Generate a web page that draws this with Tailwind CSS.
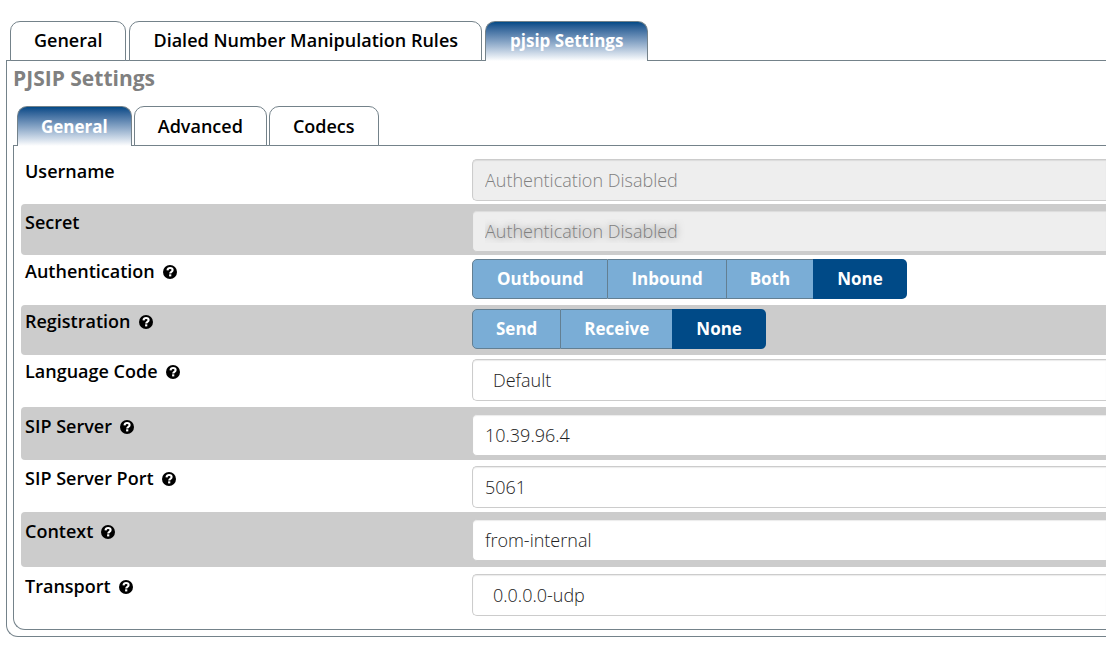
<!DOCTYPE html>
<html lang="en">
<head>
<meta charset="utf-8">
<meta name="viewport" content="width=device-width, initial-scale=1">
<title>PJSIP Settings</title>
<script src="https://cdn.jsdelivr.net/npm/@tailwindcss/browser@4"></script>
</head>
<body class="overflow-x-hidden bg-white pt-[21px] pb-3 pl-1.5 font-['Open_Sans',sans-serif] text-lg leading-6 text-black">
<svg class="hidden" aria-hidden="true">
  <symbol id="help" viewBox="0 0 14 14">
    <circle cx="7" cy="7" r="7" fill="currentColor"/>
    <path d="M4.5 5.4C4.7 3.8 5.7 3 7.1 3C8.6 3 9.6 3.9 9.6 5.1C9.6 6.9 7.2 6.8 7.2 8.5" fill="none" stroke="white" stroke-width="2.1"/>
    <path d="M6.1 9.3h2.2v2.1h-2.2z" fill="white"/>
  </symbol>
</svg>

<nav class="relative z-10 -mb-px flex gap-[3px] pl-1" aria-label="Trunk sections">
  <button class="h-10 rounded-t-[10px] border border-[#74828a] bg-white px-[23px] pb-0.5 font-semibold">General</button>
  <button class="h-10 rounded-t-[10px] border border-[#74828a] bg-white px-[23px] pb-0.5 font-semibold">Dialed Number Manipulation Rules</button>
  <button class="h-10 rounded-t-[10px] border border-b-0 border-[#74828a] bg-linear-to-b from-[#004a87] to-white px-6 pb-px text-[17px] font-bold text-white" aria-current="page">pjsip Settings</button>
</nav>

<main class="rounded-bl-[12px] border border-r-0 border-[#74828a] pb-1.5 pl-1.5">
  <h1 class="pt-[3px] text-[21px] leading-7 font-bold text-[#808080]">PJSIP Settings</h1>

  <nav class="relative z-10 mt-3.5 -mb-px flex gap-0.5 pl-1" aria-label="PJSIP sections">
    <button class="h-10 rounded-t-[10px] border border-b-0 border-[#74828a] bg-linear-to-b from-[#004a87] to-white px-[23px] text-[17px] font-bold text-white" aria-current="page">General</button>
    <button class="h-10 rounded-t-[10px] border border-[#74828a] bg-white px-[23px] font-semibold">Advanced</button>
    <button class="h-10 rounded-t-[10px] border border-[#74828a] bg-white px-[23px] font-semibold">Codecs</button>
  </nav>

  <form class="rounded-bl-[12px] border border-r-0 border-[#74828a] pt-2 pb-[13px] pl-[7px]">
    <div class="grid grid-cols-[447px_1fr] items-start pt-[5px] pb-[3px] pl-1">
      <label for="username" class="font-semibold">Username</label>
      <input id="username" disabled placeholder="Authentication Disabled" class="h-[42px] w-full rounded-l-[5px] border border-r-0 border-[#ccc] bg-[#eee] px-3 font-light shadow-[inset_0_1px_1px_rgba(0,0,0,0.08)] placeholder:text-[#808080]">
    </div>
    <div class="grid grid-cols-[447px_1fr] items-start rounded-l-[4px] bg-[#ccc] pt-1.5 pb-[3px] pl-1">
      <label for="secret" class="font-semibold">Secret</label>
      <input id="secret" disabled placeholder="Authentication Disabled" class="h-[42px] w-full rounded-l-[5px] border border-r-0 border-[#ccc] bg-[#eee] px-3 font-light shadow-[inset_0_1px_1px_rgba(0,0,0,0.08)] text-shadow-[0_0_7px_rgba(0,0,0,0.5)] placeholder:text-[#808080]">
    </div>
    <div class="grid grid-cols-[447px_1fr] items-start pt-1 pb-1.5 pl-1">
      <span id="auth" class="flex items-center gap-2 font-semibold">Authentication <svg class="mt-0.5 size-3.5" aria-hidden="true"><use href="#help"/></svg></span>
      <div role="group" aria-labelledby="auth" class="flex text-[17px] font-bold text-white">
        <button type="button" class="h-10 rounded-l-[5px] border border-[#637f92] bg-[#7aadd6] px-6">Outbound</button>
        <button type="button" class="h-10 border border-l-0 border-[#637f92] bg-[#7aadd6] px-[23px]">Inbound</button>
        <button type="button" class="h-10 border-y border-[#637f92] bg-[#7aadd6] px-[23px]">Both</button>
        <button type="button" aria-pressed="true" class="h-10 rounded-r-[5px] bg-[#004a87] px-6">None</button>
      </div>
    </div>
    <div class="grid grid-cols-[447px_1fr] items-start rounded-l-[4px] bg-[#ccc] pt-1 pb-1.5 pl-1">
      <span id="registration" class="flex items-center gap-2 font-semibold">Registration <svg class="mt-0.5 size-3.5" aria-hidden="true"><use href="#help"/></svg></span>
      <div role="group" aria-labelledby="registration" class="flex text-[17px] font-bold text-white">
        <button type="button" class="h-10 rounded-l-[5px] border border-[#637f92] bg-[#7aadd6] px-[23px]">Send</button>
        <button type="button" class="h-10 border-y border-[#637f92] bg-[#7aadd6] px-[23px]">Receive</button>
        <button type="button" aria-pressed="true" class="h-10 rounded-r-[5px] bg-[#004a87] px-6">None</button>
      </div>
    </div>
    <div class="grid grid-cols-[447px_1fr] items-start pt-1 pb-1.5 pl-1">
      <label for="language" class="flex items-center gap-2 font-semibold">Language Code <svg class="mt-0.5 size-3.5" aria-hidden="true"><use href="#help"/></svg></label>
      <select id="language" class="h-[42px] w-full appearance-none rounded-l-[5px] border border-r-0 border-[#ccc] bg-white px-5 font-light text-[#222] shadow-[inset_0_1px_1px_rgba(0,0,0,0.08)]"><option>Default</option></select>
    </div>
    <div class="grid grid-cols-[447px_1fr] items-start rounded-l-[4px] bg-[#ccc] pt-[7px] pb-1 pl-1">
      <label for="server" class="flex items-center gap-2 font-semibold">SIP Server <svg class="mt-0.5 size-3.5" aria-hidden="true"><use href="#help"/></svg></label>
      <input id="server" value="10.39.96.4" class="h-[42px] w-full rounded-l-[5px] border border-r-0 border-[#ccc] bg-white px-3 font-light text-[#222] shadow-[inset_0_1px_1px_rgba(0,0,0,0.08)]">
    </div>
    <div class="grid grid-cols-[447px_1fr] items-start pt-1.5 pb-1 pl-1">
      <label for="port" class="flex items-center gap-2 font-semibold">SIP Server Port <svg class="mt-0.5 size-3.5" aria-hidden="true"><use href="#help"/></svg></label>
      <input id="port" value="5061" class="h-[42px] w-full rounded-l-[5px] border border-r-0 border-[#ccc] bg-white px-3 font-light text-[#222] shadow-[inset_0_1px_1px_rgba(0,0,0,0.08)]">
    </div>
    <div class="grid grid-cols-[447px_1fr] items-start rounded-l-[4px] bg-[#ccc] pt-[7px] pb-1.5 pl-1">
      <label for="context" class="flex items-center gap-2 font-semibold">Context <svg class="mt-0.5 size-3.5" aria-hidden="true"><use href="#help"/></svg></label>
      <input id="context" value="from-internal" class="h-[42px] w-full rounded-l-[5px] border border-r-0 border-[#ccc] bg-white px-3 font-light text-[#222] shadow-[inset_0_1px_1px_rgba(0,0,0,0.08)]">
    </div>
    <div class="grid grid-cols-[447px_1fr] items-start pt-[7px] pl-1">
      <label for="transport" class="flex items-center gap-2 font-semibold">Transport <svg class="mt-0.5 size-3.5" aria-hidden="true"><use href="#help"/></svg></label>
      <select id="transport" class="h-[42px] w-full appearance-none rounded-l-[5px] border border-r-0 border-[#ccc] bg-white px-5 font-light text-[#222] shadow-[inset_0_1px_1px_rgba(0,0,0,0.08)]"><option>0.0.0.0-udp</option></select>
    </div>
  </form>
</main>
</body>
</html>
